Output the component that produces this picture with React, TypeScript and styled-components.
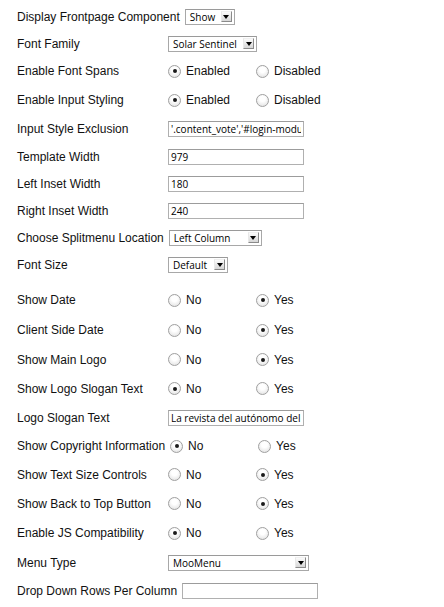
import React from 'react';
import styled, { createGlobalStyle } from 'styled-components';

const GlobalStyle = createGlobalStyle`
  body {
    margin: 0;
    background: #fff;
  }
`;

const Form = styled.div`
  display: flex;
  flex-direction: column;
  padding: 3px 0 0 17px;
  font-family: "Liberation Sans", Arial, sans-serif;
  font-size: 12px;
  color: #111;
`;

const Row = styled.div<{ $h: number }>`
  display: flex;
  align-items: center;
  height: ${(p) => p.$h}px;
`;

const Spacer = styled.div<{ $h: number }>`
  height: ${(p) => p.$h}px;
`;

const Label = styled.div`
  min-width: 146px;
  padding-right: 5px;
  white-space: nowrap;
  flex-shrink: 0;
`;

const SelectBox = styled.div<{ $w: number }>`
  box-sizing: border-box;
  width: ${(p) => p.$w}px;
  height: 16px;
  display: flex;
  align-items: center;
  justify-content: space-between;
  border: 1px solid #a8a8a8;
  border-top-color: #9a9a9a;
  background: #fff;
  padding: 0 2px 0 4px;
  font-family: "Open Sans", sans-serif;
  font-size: 10px;
  line-height: 14px;
  color: #000;
  white-space: nowrap;
`;

const ArrowBox = styled.span`
  box-sizing: border-box;
  flex-shrink: 0;
  width: 11px;
  height: 11px;
  background: linear-gradient(#fbfbfb, #d6d6d6);
  border-right: 1px solid #8a8a8a;
  border-bottom: 1px solid #8a8a8a;
  border-left: 1px solid #e8e8e8;
  border-top: 1px solid #f0f0f0;
  display: flex;
  align-items: center;
  justify-content: center;

  &::after {
    content: '';
    width: 0;
    height: 0;
    border-left: 3px solid transparent;
    border-right: 3px solid transparent;
    border-top: 4px solid #000;
  }
`;

const TextField = styled.input<{ $w: number }>`
  box-sizing: border-box;
  width: ${(p) => p.$w}px;
  height: 16px;
  margin: 0;
  padding: 0 2px;
  border: 1px solid #b0b0b0;
  border-top-color: #9c9c9c;
  background: #fff;
  font-family: "Open Sans", sans-serif;
  font-size: 10px;
  line-height: 14px;
  color: #000;
  outline: none;
`;

const Group = styled.div`
  display: flex;
`;

const Option = styled.label`
  display: flex;
  align-items: center;
  width: 88px;
`;

const Radio = styled.span<{ $on: boolean }>`
  box-sizing: border-box;
  width: 13px;
  height: 13px;
  margin-right: 5px;
  border-radius: 50%;
  border: 1px solid #a0a0a0;
  background: radial-gradient(circle at 50% 35%, #ffffff 30%, #dcdcdc 100%);
  display: flex;
  align-items: center;
  justify-content: center;

  &::after {
    content: '';
    width: 4px;
    height: 4px;
    border-radius: 50%;
    background: ${(p) => (p.$on ? '#1a1a1a' : 'transparent')};
  }
`;

function Select({ w, value }: { w: number; value: string }) {
  return (
    <SelectBox $w={w}>
      <span>{value}</span>
      <ArrowBox />
    </SelectBox>
  );
}

function Radios({ options, checked }: { options: [string, string]; checked: 0 | 1 }) {
  return (
    <Group>
      {options.map((o, i) => (
        <Option key={o}>
          <Radio $on={checked === i} />
          {o}
        </Option>
      ))}
    </Group>
  );
}

const yesNo: [string, string] = ['No', 'Yes'];
const onOff: [string, string] = ['Enabled', 'Disabled'];

export default function App() {
  return (
    <>
      <GlobalStyle />
      <Form>
        <Row $h={27}>
          <Label>Display Frontpage Component</Label>
          <Select w={50} value="Show" />
        </Row>
        <Row $h={27}>
          <Label>Font Family</Label>
          <Select w={89} value="Solar Sentinel" />
        </Row>
        <Row $h={28}>
          <Label>Enable Font Spans</Label>
          <Radios options={onOff} checked={0} />
        </Row>
        <Row $h={30}>
          <Label>Enable Input Styling</Label>
          <Radios options={onOff} checked={0} />
        </Row>
        <Row $h={28}>
          <Label>Input Style Exclusion</Label>
          <TextField $w={136} readOnly value="'.content_vote','#login-module'" />
        </Row>
        <Row $h={27}>
          <Label>Template Width</Label>
          <TextField $w={136} readOnly value="979" />
        </Row>
        <Row $h={27}>
          <Label>Left Inset Width</Label>
          <TextField $w={136} readOnly value="180" />
        </Row>
        <Row $h={27}>
          <Label>Right Inset Width</Label>
          <TextField $w={136} readOnly value="240" />
        </Row>
        <Row $h={27}>
          <Label>Choose Splitmenu Location</Label>
          <Select w={93} value="Left Column" />
        </Row>
        <Row $h={27}>
          <Label>Font Size</Label>
          <Select w={60} value="Default" />
        </Row>
        <Spacer $h={7} />
        <Row $h={30}>
          <Label>Show Date</Label>
          <Radios options={yesNo} checked={1} />
        </Row>
        <Row $h={30}>
          <Label>Client Side Date</Label>
          <Radios options={yesNo} checked={1} />
        </Row>
        <Row $h={29}>
          <Label>Show Main Logo</Label>
          <Radios options={yesNo} checked={1} />
        </Row>
        <Row $h={29}>
          <Label>Show Logo Slogan Text</Label>
          <Radios options={yesNo} checked={0} />
        </Row>
        <Row $h={29}>
          <Label>Logo Slogan Text</Label>
          <TextField $w={136} readOnly value="La revista del autónomo del siglo XXI" />
        </Row>
        <Row $h={28}>
          <Label>Show Copyright Information</Label>
          <Radios options={yesNo} checked={0} />
        </Row>
        <Row $h={29}>
          <Label>Show Text Size Controls</Label>
          <Radios options={yesNo} checked={1} />
        </Row>
        <Row $h={29}>
          <Label>Show Back to Top Button</Label>
          <Radios options={yesNo} checked={1} />
        </Row>
        <Row $h={30}>
          <Label>Enable JS Compatibility</Label>
          <Radios options={yesNo} checked={0} />
        </Row>
        <Row $h={29}>
          <Label>Menu Type</Label>
          <Select w={141} value="MooMenu" />
        </Row>
        <Row $h={27}>
          <Label>Drop Down Rows Per Column</Label>
          <TextField $w={136} readOnly value="" />
        </Row>
      </Form>
    </>
  );
}
